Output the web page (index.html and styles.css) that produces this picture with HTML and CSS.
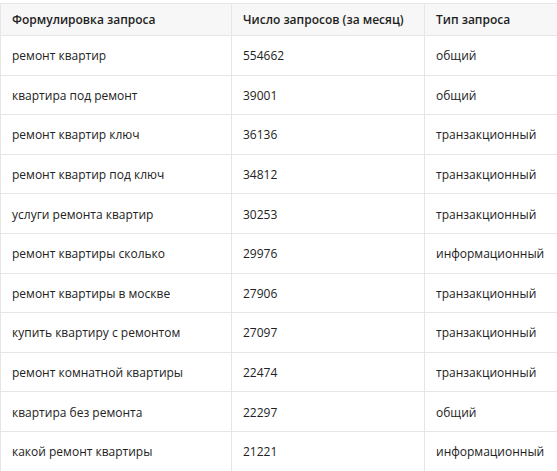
FILE: index.html
```html
<!DOCTYPE html>
<html lang="ru">
<head>
<meta charset="utf-8">
<link rel="stylesheet" href="styles.css">
</head>
<body>
<table class="data">
  <thead>
    <tr><th class="c1">Формулировка запроса</th><th class="c2">Число запросов (за месяц)</th><th class="c3">Тип запроса</th></tr>
  </thead>
  <tbody>
    <tr><td>ремонт квартир</td><td>554662</td><td>общий</td></tr>
    <tr><td>квартира под ремонт</td><td>39001</td><td>общий</td></tr>
    <tr><td>ремонт квартир ключ</td><td>36136</td><td>транзакционный</td></tr>
    <tr><td>ремонт квартир под ключ</td><td>34812</td><td>транзакционный</td></tr>
    <tr><td>услуги ремонта квартир</td><td>30253</td><td>транзакционный</td></tr>
    <tr><td>ремонт квартиры сколько</td><td>29976</td><td>информационный</td></tr>
    <tr><td>ремонт квартиры в москве</td><td>27906</td><td>транзакционный</td></tr>
    <tr><td>купить квартиру с ремонтом</td><td>27097</td><td>транзакционный</td></tr>
    <tr><td>ремонт комнатной квартиры</td><td>22474</td><td>транзакционный</td></tr>
    <tr><td>квартира без ремонта</td><td>22297</td><td>общий</td></tr>
    <tr><td>какой ремонт квартиры</td><td>21221</td><td>информационный</td></tr>
  </tbody>
</table>
</body>
</html>
```
FILE: styles.css
```css
html, body {
  margin: 0;
  padding: 0;
  background: #ffffff;
}
body {
  padding-top: 3px;
  font-family: "Open Sans", "Noto Sans", sans-serif;
  font-size: 12px;
  color: #222222;
}
.data {
  border-collapse: collapse;
  width: 557px;
  table-layout: fixed;
  border: 1px solid #e6e6e6;
}
.data th, .data td {
  box-sizing: border-box;
  border: 1px solid #e6e6e6;
  text-align: left;
  padding: 0 0 0 11px;
  white-space: nowrap;
}
.data th {
  background: #f7f7f7;
  font-weight: 600;
  height: 32px;
  color: #1e1e1e;
}
.data td {
  height: 39.6px;
  padding-top: 1px;
}
.data .c1 { width: 231px; }
.data .c2 { width: 193px; }
.data .c3 { width: 133px; }
```
